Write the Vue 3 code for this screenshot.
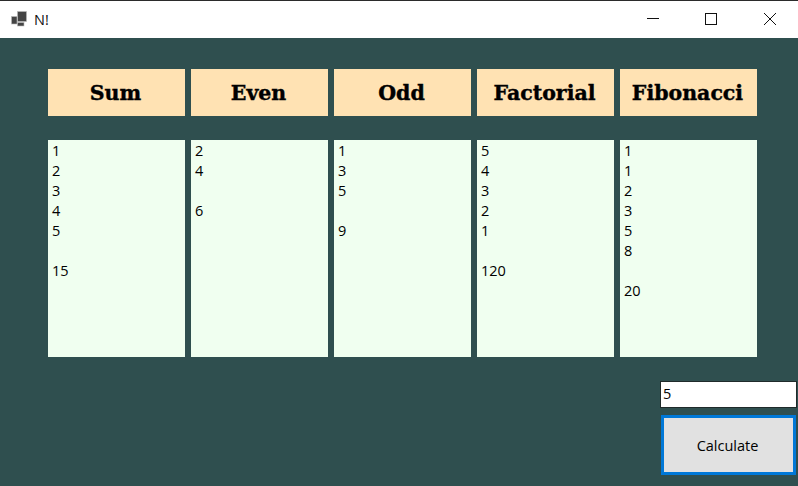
<script setup>
const columns = [
  { title: 'Sum', lines: ['1', '2', '3', '4', '5', '', '15'] },
  { title: 'Even', lines: ['2', '4', '', '6'] },
  { title: 'Odd', lines: ['1', '3', '5', '', '9'] },
  { title: 'Factorial', lines: ['5', '4', '3', '2', '1', '', '120'] },
  { title: 'Fibonacci', lines: ['1', '1', '2', '3', '5', '8', '', '20'] },
]
</script>

<template>
  <div class="window">
    <header class="titlebar">
      <div class="brand">
        <svg class="app-icon" width="16" height="16" viewBox="0 0 16 16">
          <rect x="6.5" y="0.5" width="9" height="10" fill="#444" stroke="#bbb" stroke-width="0.6" />
          <rect x="0.5" y="5.5" width="5.5" height="7.5" fill="#444" stroke="#bbb" stroke-width="0.6" />
          <rect x="6.5" y="11.5" width="6.5" height="3.5" fill="#444" stroke="#bbb" stroke-width="0.6" />
        </svg>
        <span class="app-title">N!</span>
      </div>
      <div class="controls">
        <div class="control">
          <svg width="12" height="12" viewBox="0 0 12 12"><path d="M0 5.5H12" stroke="#111" fill="none" /></svg>
        </div>
        <div class="control">
          <svg width="12" height="12" viewBox="0 0 12 12"><rect x="0.5" y="0.5" width="11" height="11" stroke="#111" fill="none" /></svg>
        </div>
        <div class="control close">
          <svg width="12" height="12" viewBox="0 0 12 12"><path d="M0 0L12 12M12 0L0 12" stroke="#111" fill="none" /></svg>
        </div>
      </div>
    </header>

    <main class="content">
      <div class="heads">
        <div v-for="c in columns" :key="c.title" class="head">{{ c.title }}</div>
      </div>
      <div class="boxes">
        <div v-for="c in columns" :key="c.title" class="box">
          <div v-for="(line, i) in c.lines" :key="i" class="line">{{ line }}</div>
        </div>
      </div>
      <div class="actions">
        <div class="input">5</div>
        <button class="calc">Calculate</button>
      </div>
    </main>
  </div>
</template>

<style>
html, body { margin: 0; padding: 0; overflow: hidden; }
</style>

<style scoped>
.window {
  width: 798px;
  height: 486px;
  display: flex;
  flex-direction: column;
  background: #2f4f4f;
  overflow: hidden;
}
.titlebar {
  height: 37px;
  flex: none;
  background: #fff;
  border-top: 1px solid #2b2b2b;
  display: flex;
  justify-content: space-between;
  align-items: stretch;
}
.brand {
  display: flex;
  align-items: center;
  padding: 0 0 1px 11px;
  gap: 7px;
}
.app-icon { display: block; }
.app-title {
  font: 14.5px "Open Sans", sans-serif;
  color: #111;
}
.controls { display: flex; margin-right: -1px; }
.control {
  width: 58px;
  padding-bottom: 1px;
  display: flex;
  align-items: center;
  justify-content: center;
}
.close { margin-left: 1px; }
.content {
  flex: 1;
  display: flex;
  flex-direction: column;
  padding: 31px 0 0 48px;
}
.heads, .boxes { display: flex; gap: 6px; }
.head {
  width: 135px;
  height: 47px;
  padding-right: 2px;
  background: #ffe2b3;
  display: flex;
  align-items: center;
  justify-content: center;
  font: bold 20.5px "DejaVu Serif", serif;
  color: #000;
  -webkit-text-stroke: 0.4px #000;
  white-space: nowrap;
  overflow: hidden;
}
.boxes { margin-top: 24px; }
.box {
  width: 133px;
  height: 215px;
  padding: 1px 0 1px 4px;
  background: #f0fff0;
  font: 14.5px/20px "Open Sans", sans-serif;
  color: #000;
}
.line { height: 20px; }
.actions {
  margin-top: 24px;
  margin-left: 612px;
  display: flex;
  flex-direction: column;
}
.input {
  width: 133px;
  height: 23px;
  border: 1px solid #1f2a2a;
  padding: 1px 0 1px 2px;
  background: #fff;
  font: 14.5px/22px "Open Sans", sans-serif;
  color: #000;
}
.calc {
  width: 135px;
  height: 60px;
  margin: 7px 0 0 1px;
  border: 3px solid #0078d7;
  background: #e1e1e1;
  font: 14.5px "Open Sans", sans-serif;
  color: #000;
  padding: 0 2px 0 0;
}
</style>
